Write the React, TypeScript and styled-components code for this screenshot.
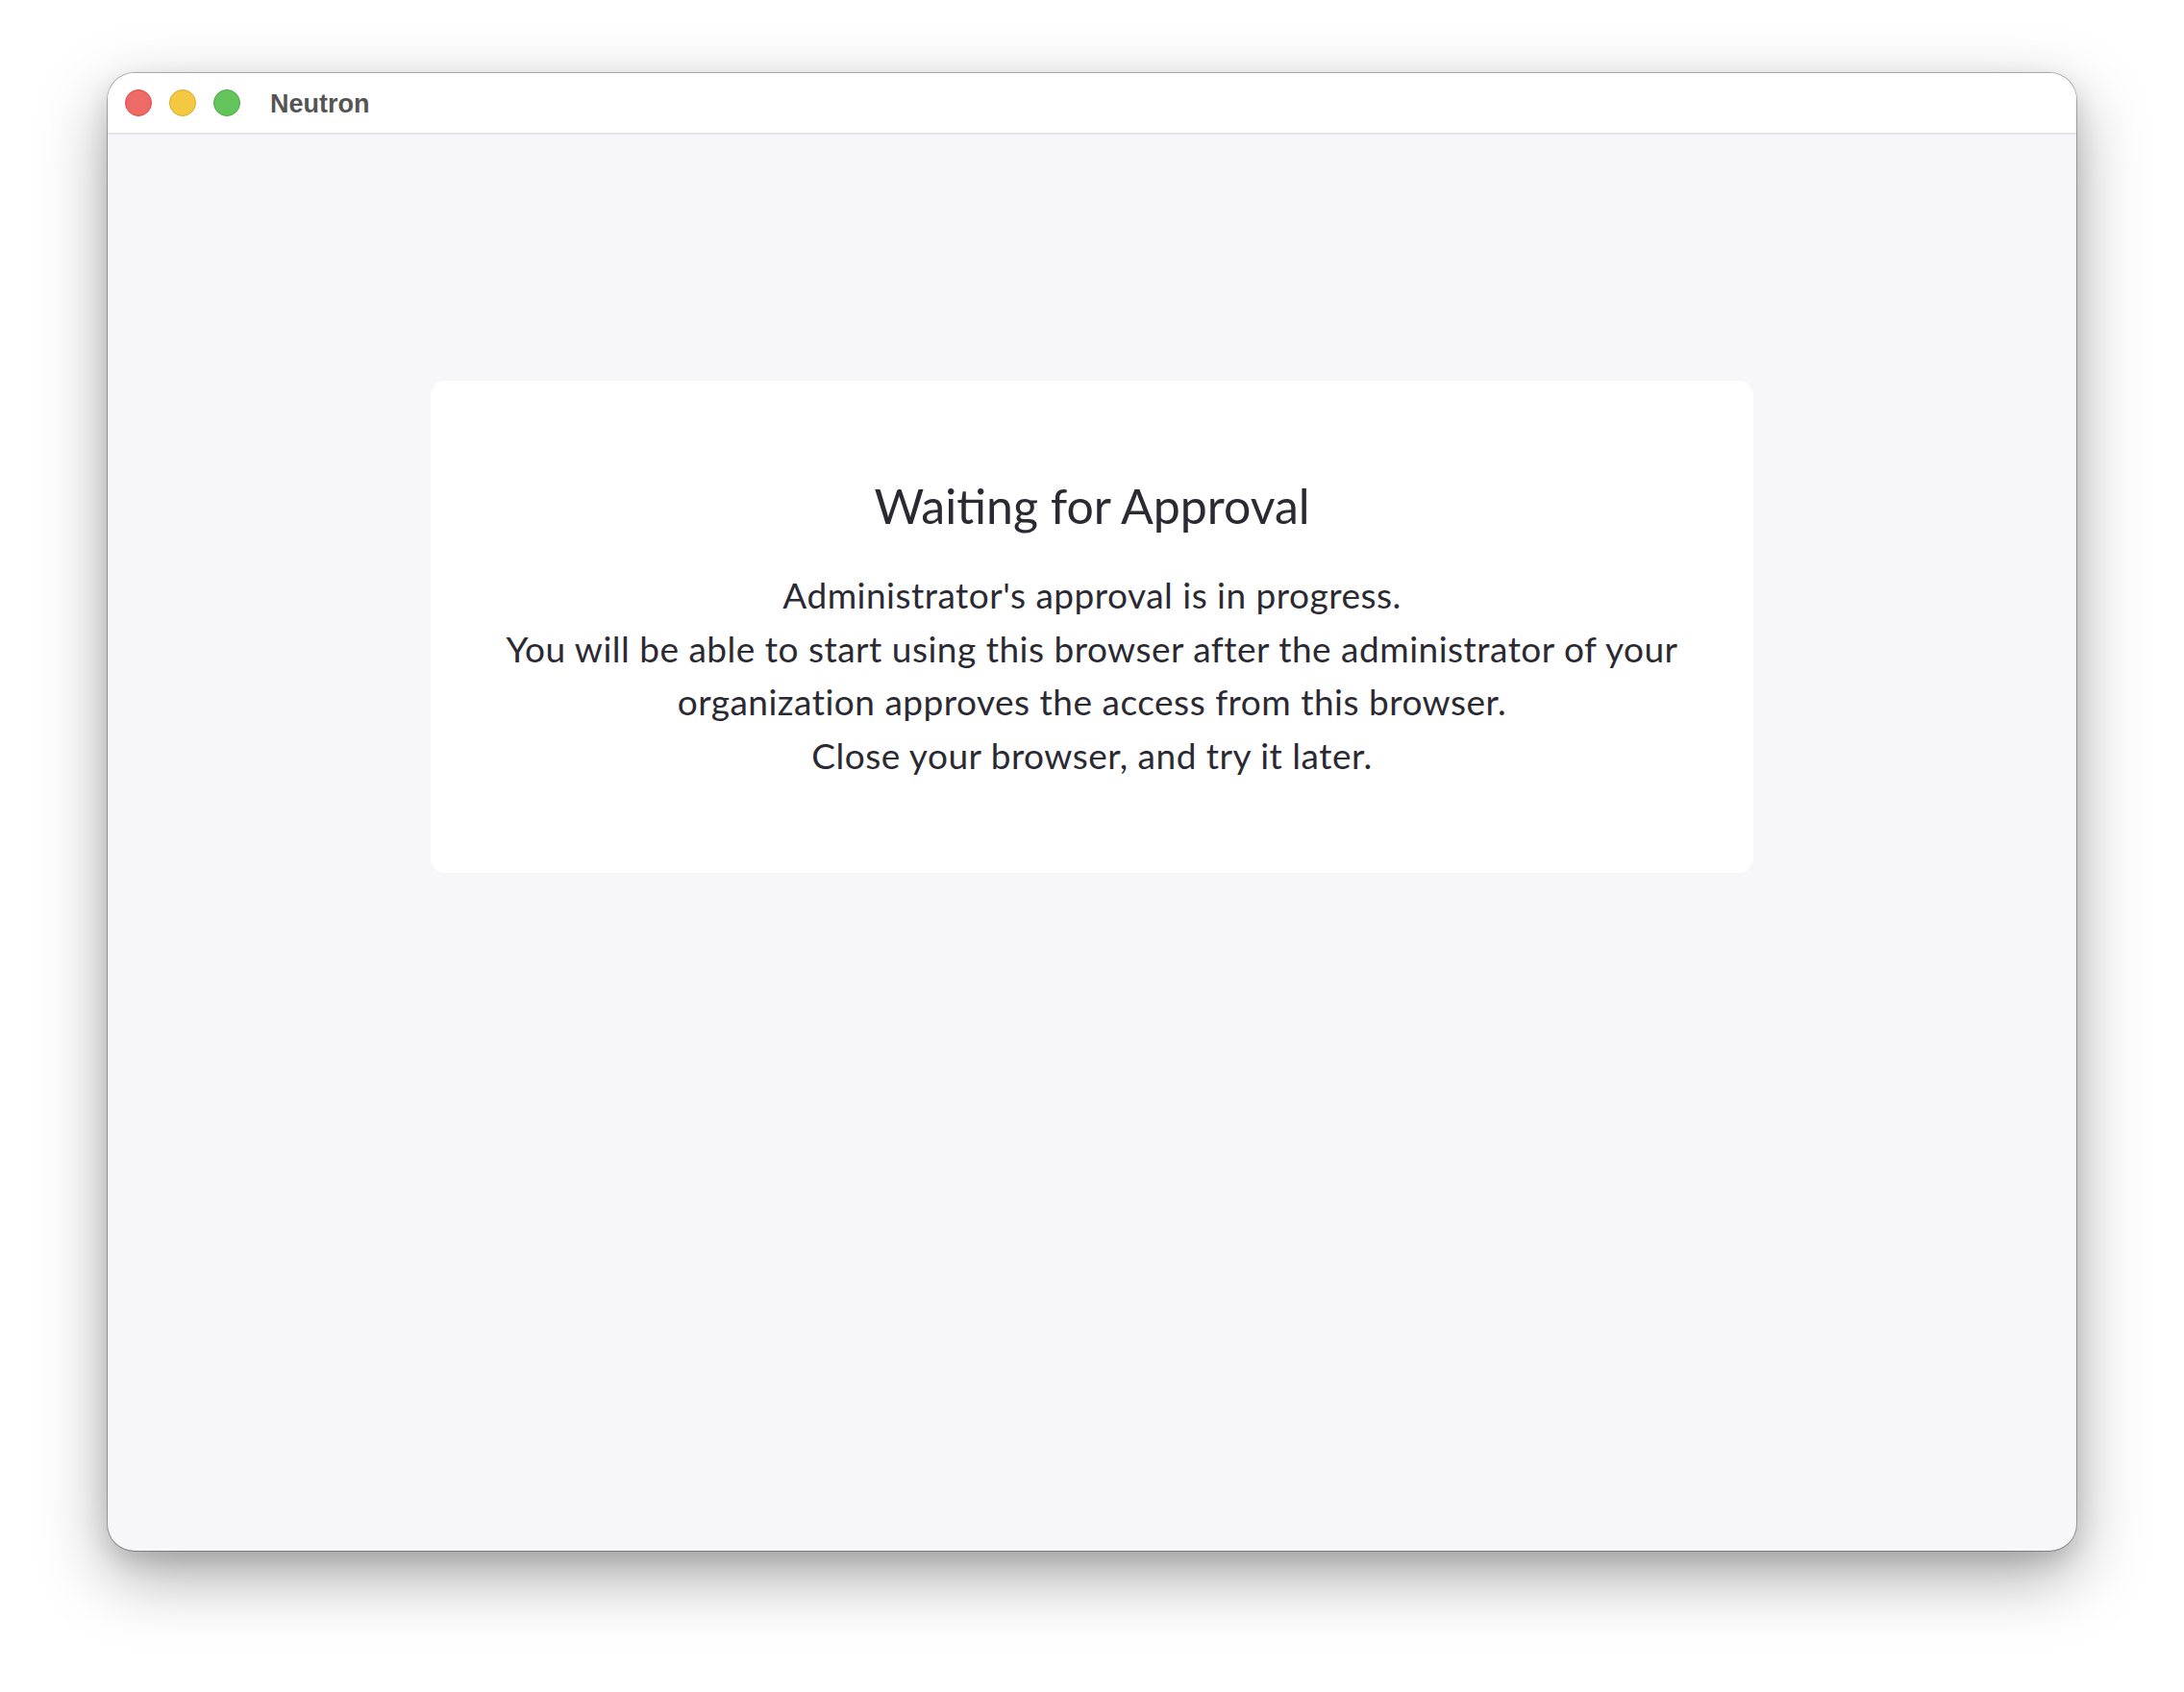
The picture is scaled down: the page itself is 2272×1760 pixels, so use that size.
import React from 'react'
import styled, { createGlobalStyle } from 'styled-components'

const GlobalStyle = createGlobalStyle`
    html, body {
        margin: 0;
        padding: 0;
        background: #fff;
    }
`

const lights = ['#ee6a67', '#f4c840', '#62c45a']
const lightBorders = ['#dc4a47', '#dcaa2a', '#4aac44']

const lines = [
    "Administrator's approval is in progress.",
    'You will be able to start using this browser after the administrator of your',
    'organization approves the access from this browser.',
    'Close your browser, and try it later.',
]

export default function App() {
    return (
        <Page>
            <GlobalStyle />
            <Window>
                <TitleBar>
                    <Lights>
                        {lights.map((c, i) => (
                            <Light key={c} $color={c} $border={lightBorders[i]} />
                        ))}
                    </Lights>
                    <AppName>Neutron</AppName>
                </TitleBar>
                <Content>
                    <Card>
                        <Heading>Waiting for Approval</Heading>
                        <Message>
                            {lines.map((l) => (
                                <Line key={l}>{l}</Line>
                            ))}
                        </Message>
                    </Card>
                </Content>
            </Window>
        </Page>
    )
}

const Page = styled.div`
    width: 2272px;
    height: 1760px;
    box-sizing: border-box;
    padding: 76px 0 0 112px;
    display: flex;
    align-items: flex-start;
`

const Window = styled.div`
    width: 2048px;
    height: 1537px;
    border-radius: 28px;
    overflow: hidden;
    background: #f7f7f9;
    display: flex;
    flex-direction: column;
    box-shadow: 0 0 0 1px rgba(0, 0, 0, 0.28), 0 26px 70px rgba(0, 0, 0, 0.34), 0 10px 24px rgba(0, 0, 0, 0.12);
`

const TitleBar = styled.div`
    height: 62px;
    flex-shrink: 0;
    display: flex;
    align-items: center;
    padding-left: 18px;
    gap: 31px;
    background: #fff;
    border-bottom: 2px solid #e6e6e8;
`

const Lights = styled.div`
    display: flex;
    gap: 18px;
`

const Light = styled.span<{ $color: string; $border: string }>`
    width: 26px;
    height: 26px;
    border-radius: 50%;
    background: ${(p) => p.$color};
    border: 1px solid ${(p) => p.$border};
`

const AppName = styled.div`
    font-family: 'Liberation Sans', Arial, sans-serif;
    font-weight: bold;
    font-size: 27px;
    color: #555;
    padding-top: 2px;
`

const Content = styled.div`
    flex: 1;
    display: flex;
    justify-content: center;
    padding-top: 256px;
`

const Card = styled.div`
    width: 1376px;
    height: 512px;
    box-sizing: border-box;
    background: #fff;
    border-radius: 16px;
    padding-top: 100px;
    display: flex;
    flex-direction: column;
    align-items: center;
    font-family: Lato, 'Open Sans', sans-serif;
    color: #2b2a33;
`

const Heading = styled.h1`
    margin: 0;
    font-size: 50px;
    line-height: 60px;
    font-weight: 400;
`

const Message = styled.div`
    margin-top: 35px;
    font-size: 37px;
    letter-spacing: 0.5px;
    line-height: 55.5px;
    text-align: center;
`

const Line = styled.div`
    white-space: nowrap;
`
